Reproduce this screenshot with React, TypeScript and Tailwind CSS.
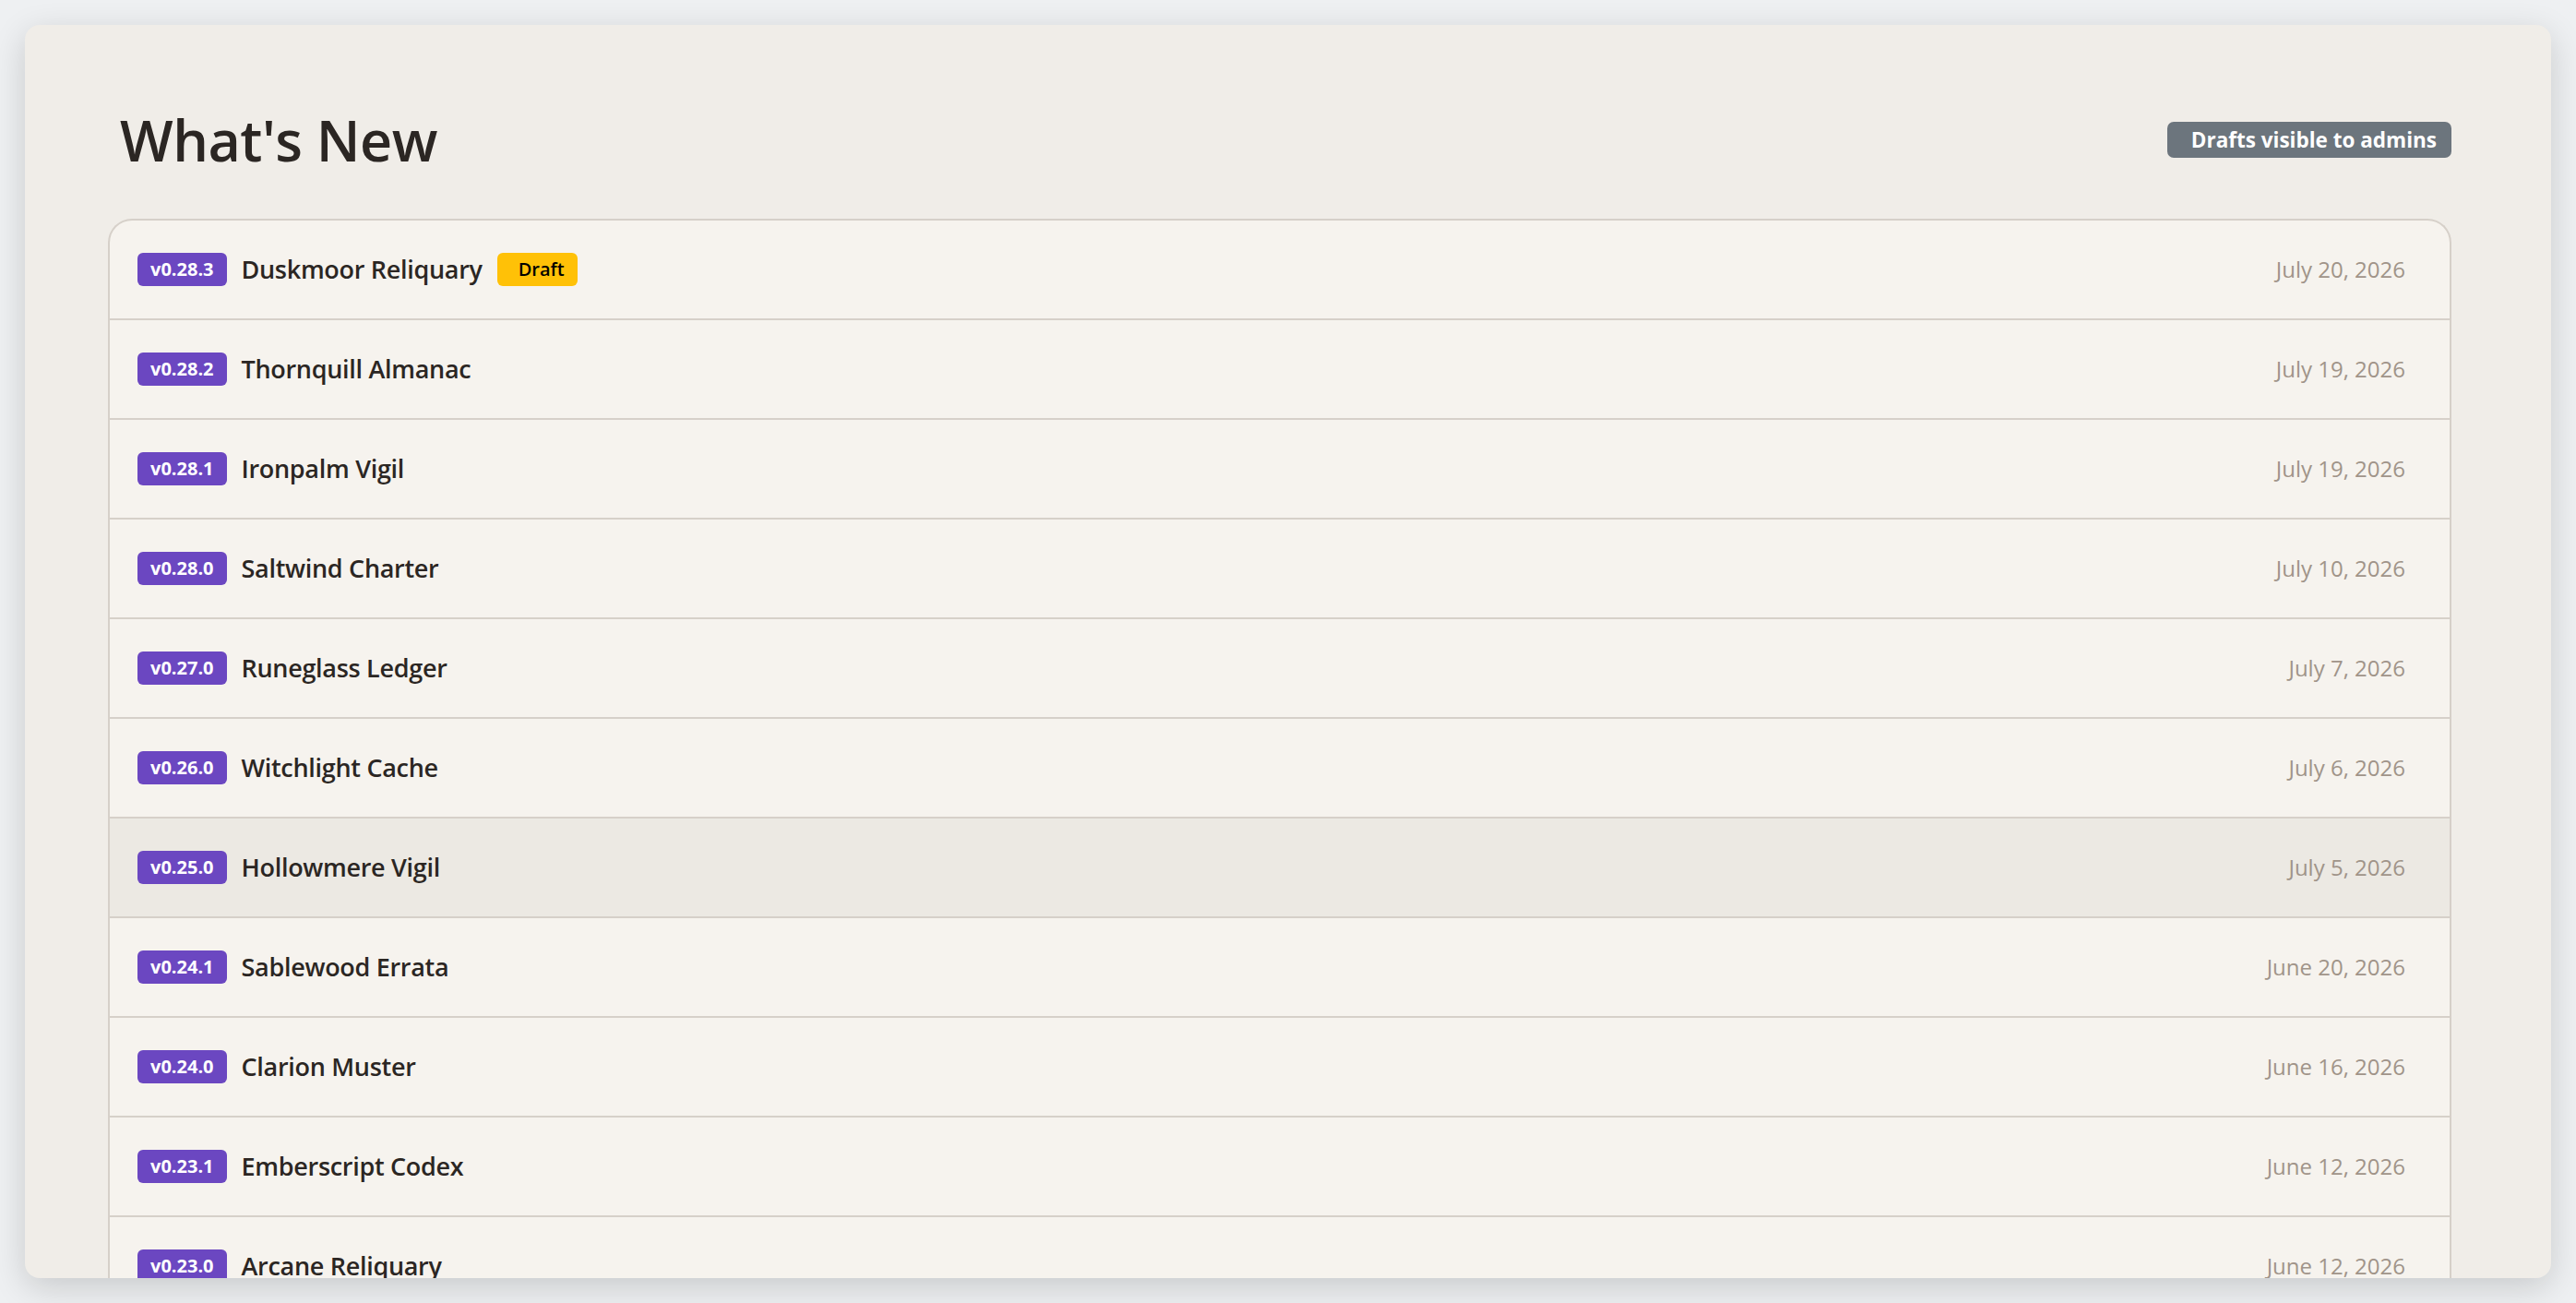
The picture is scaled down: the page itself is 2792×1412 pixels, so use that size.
const releases = [
  { version: "v0.28.3", name: "Duskmoor Reliquary", date: "July 20, 2026", draft: true },
  { version: "v0.28.2", name: "Thornquill Almanac", date: "July 19, 2026" },
  { version: "v0.28.1", name: "Ironpalm Vigil", date: "July 19, 2026" },
  { version: "v0.28.0", name: "Saltwind Charter", date: "July 10, 2026" },
  { version: "v0.27.0", name: "Runeglass Ledger", date: "July 7, 2026" },
  { version: "v0.26.0", name: "Witchlight Cache", date: "July 6, 2026" },
  { version: "v0.25.0", name: "Hollowmere Vigil", date: "July 5, 2026", hover: true },
  { version: "v0.24.1", name: "Sablewood Errata", date: "June 20, 2026" },
  { version: "v0.24.0", name: "Clarion Muster", date: "June 16, 2026" },
  { version: "v0.23.1", name: "Emberscript Codex", date: "June 12, 2026" },
  { version: "v0.23.0", name: "Arcane Reliquary", date: "June 12, 2026" },
  { version: "v0.22.0", name: "Gloamstone Register", date: "June 3, 2026" },
];

const App = () => {
  return (
    <div className="h-screen w-full bg-[#eef0f2] p-[27px] font-['Open_Sans','Noto_Sans',sans-serif]">
      {/* Panel */}
      <div className="h-full overflow-hidden rounded-[16px] bg-[#f0ede8] pl-[90px] pr-[108px] pt-[88px] shadow-[0_10px_36px_rgba(0,0,0,0.16)]">
        {/* Header */}
        <div className="flex items-center justify-between pl-[13px]">
          <h1 className="text-[61px] font-semibold leading-[1.2] tracking-[-0.5px] text-[#2b2623]">What's New</h1>
          <span className="flex h-[39px] items-center rounded-[7px] bg-[#6c757d] pl-[26px] pr-[16px] text-[22.5px] font-bold text-white">
            Drafts visible to admins
          </span>
        </div>

        {/* Release list */}
        <div className="mt-[49px] overflow-hidden rounded-t-[26px] border-2 border-b-0 border-[#d6d0c9] bg-[#f6f3ee]">
          {releases.map((r) => (
            <div
              key={r.version + r.name}
              className={`flex h-[108px] items-center justify-between border-b-2 border-[#d6d0c9] pl-[30px] pr-[48px] ${
                r.hover ? "bg-[#ece9e3]" : ""
              }`}
            >
              <div className="flex items-center">
                <span className="flex h-[36px] items-center rounded-[6px] bg-[#6b47c1] px-[14px] text-[20px] font-bold text-white">
                  {r.version}
                </span>
                <span className="ml-[16px] text-[27px] font-semibold tracking-[-0.3px] text-[#2b2623]">{r.name}</span>
                {r.draft && (
                  <span className="ml-[16px] flex h-[36px] items-center rounded-[6px] bg-[#ffc107] pl-[23px] pr-[14px] text-[20px] font-semibold text-black">
                    Draft
                  </span>
                )}
              </div>
              <span className="text-[24px] text-[#a09489]">{r.date}</span>
            </div>
          ))}
        </div>
      </div>
    </div>
  );
};

export default App;
